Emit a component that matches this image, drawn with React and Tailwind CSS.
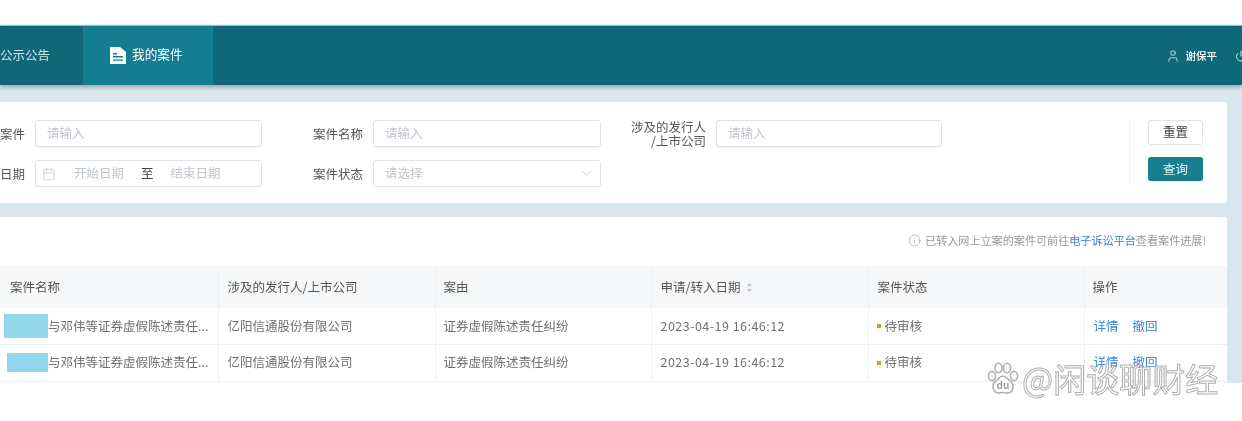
import { Calendar, ChevronDown, User, Power, Info } from "lucide-react"

const rows = [
    { w: "w-[44px] h-[24px]", ml: "ml-[4px]" },
    { w: "w-[41px] h-[19px]", ml: "ml-[7px]" },
]

const Field = ({ placeholder }) => (
    <div className="h-[27px] border border-[#dfe3e8] rounded-[3px] bg-white flex items-center pl-[11px] text-[12.5px] text-[#c0c4cc] shadow-[0_1px_1px_rgba(0,0,0,0.04)]">
        {placeholder}
    </div>
)

const Label = ({ children }) => (
    <div className="h-[27px] flex items-center justify-end pr-[10px] text-[12.5px] leading-[14px] text-[#555] text-right">{children}</div>
)

const PawLogo = () => (
    <svg width="32" height="33" viewBox="0 0 32 33" fill="#ffffff" stroke="#b0b0b0" strokeWidth="1.6">
        <ellipse cx="5" cy="14" rx="3.6" ry="4.6" />
        <ellipse cx="11.5" cy="6" rx="3.6" ry="4.8" />
        <ellipse cx="20" cy="6" rx="3.6" ry="4.8" />
        <ellipse cx="27" cy="14" rx="3.6" ry="4.6" />
        <path d="M16 14c-4 0-5 4-8 6-3 2-3 10 3 11 2 .4 3-.5 5-.5s3 .9 5 .5c6-1 6-9 3-11-3-2-4-6-8-6z" />
        <text x="16" y="27" textAnchor="middle" fontSize="10" fontWeight="700" fill="#a0a0a0" stroke="none">du</text>
    </svg>
)

const App = () => {
    return <div className="relative w-[1242px] h-[421px] overflow-hidden bg-white font-['Noto_Sans_CJK_SC','Noto_Sans',sans-serif] blur-[0.5px]">
        <div className="h-[26px] bg-white"></div>

        <header className="h-[59px] bg-[#0f6879] flex items-stretch text-[12.5px] shadow-[0_2px_4px_rgba(0,0,0,0.3),0_-1px_1px_#9cc8d1] relative z-10">
            <div className="w-[83px] bg-[#116678] text-[#cfe3e8] flex items-center">
                <span>公示公告</span>
            </div>
            <div className="w-[130px] bg-[#147d92] text-white flex items-center pl-[27px] gap-[6px] text-[12.7px]">
                <svg width="16" height="17" viewBox="0 0 16 17" fill="#ffffff">
                    <path d="M0 0h10l6 5v12H0z" />
                    <path d="M3 6h4v1.4H3zM3 9h10v1.4H3zM3 12.4h10v1.4H3z" fill="#147d92" />
                </svg>
                <span className="pb-[3px]">我的案件</span>
            </div>
            <div className="flex-1 flex items-center justify-end text-white -mr-[5px]">
                <User size={14} strokeWidth={1.5} className="text-[#d5e6ea] mr-[6px]" />
                <span className="text-[10.5px] font-medium">谢保平</span>
                <Power size={12} className="text-[#d5e6ea] ml-[18px]" />
            </div>
        </header>

        <main className="h-[298px] bg-[#d9e6eb] pt-[17px] pr-[15px] flex flex-col gap-[14px]">
            <section className="h-[101px] bg-white rounded-r-[3px] pt-[18px] flex">
                <div className="w-[1129px] grid grid-cols-[35px_227px_111px_228px_115px_226px] auto-rows-[27px] gap-y-[13px] content-start">
                    <Label>案件</Label>
                    <Field placeholder="请输入" />
                    <Label>案件名称</Label>
                    <Field placeholder="请输入" />
                    <Label>涉及的发行人<br />/上市公司</Label>
                    <Field placeholder="请输入" />

                    <Label>日期</Label>
                    <div className="h-[27px] border border-[#dfe3e8] rounded-[3px] bg-white flex items-center pl-[6px] text-[12.5px] text-[#c0c4cc]">
                        <Calendar size={14} strokeWidth={1.2} />
                        <span className="ml-[18px]">开始日期</span>
                        <span className="ml-[17px] text-[#444]">至</span>
                        <span className="ml-[17px]">结束日期</span>
                    </div>
                    <Label>案件状态</Label>
                    <div className="h-[27px] border border-[#dfe3e8] rounded-[3px] bg-white flex items-center justify-between pl-[11px] pr-[6px] text-[12.5px] text-[#c0c4cc]">
                        <span>请选择</span>
                        <ChevronDown size={15} strokeWidth={1.2} />
                    </div>
                </div>
                <div className="h-[63px] border-l border-[#ebeef0] pl-[18px] flex flex-col gap-[12px]">
                    <button className="w-[55px] h-[25px] border border-[#dfe3e8] rounded-[3px] bg-white text-[12.5px] text-[#444]">重置</button>
                    <button className="w-[55px] h-[24px] rounded-[3px] bg-[#177f90] text-[12.5px] text-[#e6f2f4]">查询</button>
                </div>
            </section>

            <section className="h-[166px] bg-white rounded-tr-[3px]">
                <div className="h-[49px] flex items-center justify-end pr-[21px] pb-[2px] text-[11.1px] text-[#999]">
                    <Info size={13} strokeWidth={1.2} className="mr-[4px]" />
                    <span>已转入网上立案的案件可前往<span className="text-[#3a7fd0]">电子诉讼平台</span>查看案件进展!</span>
                </div>
                <table className="w-full table-fixed border-collapse text-[12.5px] text-left">
                    <colgroup>
                        <col className="w-[218px]" />
                        <col className="w-[217px]" />
                        <col className="w-[216px]" />
                        <col className="w-[217px]" />
                        <col className="w-[216px]" />
                        <col />
                    </colgroup>
                    <thead>
                        <tr className="h-[42px] bg-[#f5f7f9] text-[#555]">
                            <th className="font-normal pl-[10px] border-r border-[#eef0f3]">案件名称</th>
                            <th className="font-normal pl-[9px] border-r border-[#eef0f3]">涉及的发行人/上市公司</th>
                            <th className="font-normal pl-[8px] border-r border-[#eef0f3]">案由</th>
                            <th className="font-normal pl-[9px] border-r border-[#eef0f3]">
                                <span className="inline-flex items-center gap-[6px]">
                                    申请/转入日期
                                    <svg width="7" height="11" viewBox="0 0 7 11" fill="#c4c8cc">
                                        <path d="M3.5 1 6 4H1zM3.5 10 1 7h5z" />
                                    </svg>
                                </span>
                            </th>
                            <th className="font-normal pl-[9px] border-r border-[#eef0f3]">案件状态</th>
                            <th className="font-normal pl-[8px]">操作</th>
                        </tr>
                    </thead>
                    <tbody className="text-[#707070]">
                        {rows.map((r, i) => (
                            <tr key={i} className="h-[36.5px] border-b border-[#eef0f3]">
                                <td className="border-r border-[#eef0f3] whitespace-nowrap overflow-hidden">
                                    <div className="flex items-center">
                                        <span className={`${r.w} ${r.ml} bg-[#93d7ec] shrink-0`}></span>
                                        <span>与邓伟等证券虚假陈述责任...</span>
                                    </div>
                                </td>
                                <td className="pl-[9px] border-r border-[#eef0f3]">亿阳信通股份有限公司</td>
                                <td className="pl-[8px] border-r border-[#eef0f3]">证券虚假陈述责任纠纷</td>
                                <td className="pl-[9px] border-r border-[#eef0f3] tracking-[0.47px]">2023-04-19 16:46:12</td>
                                <td className="pl-[8px] border-r border-[#eef0f3]">
                                    <div className="flex items-center gap-[4px]">
                                        <span className="w-[4px] h-[4px] bg-[#e8913f]"></span>
                                        <span>待审核</span>
                                    </div>
                                </td>
                                <td className="pl-[9px] text-[#3a86d8]">
                                    <span>详情</span>
                                    <span className="ml-[14px]">撤回</span>
                                </td>
                            </tr>
                        ))}
                    </tbody>
                </table>
            </section>
        </main>

        <div className="absolute left-[987px] top-[361px] flex items-center gap-[3px] text-[33px] leading-[34px] text-[rgba(255,255,255,0.75)] [-webkit-text-stroke:1px_#b0b0b0]">
            <PawLogo />
            <span>@闲谈聊财经</span>
        </div>
    </div>
}

export default App
